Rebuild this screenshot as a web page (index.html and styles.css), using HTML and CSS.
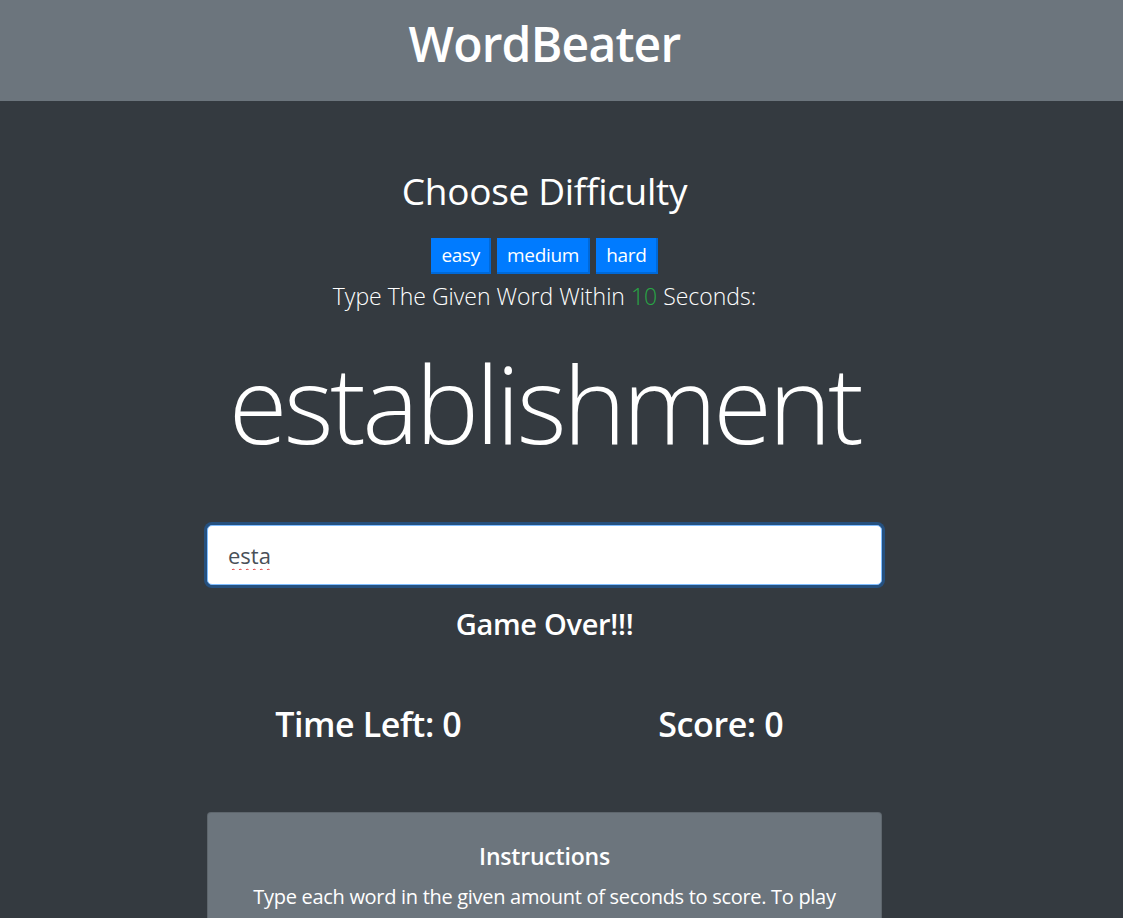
FILE: index.html
```html
<!DOCTYPE html>
<html lang="en">
<head>
<meta charset="utf-8">
<title>WordBeater</title>
<link rel="stylesheet" href="styles.css">
</head>
<body>
<header class="topbar">
  <div class="page">
    <h1 class="brand">WordBeater</h1>
  </div>
</header>
<main class="page">
  <div class="column">
    <h2 class="choose">Choose Difficulty</h2>
    <div class="levels">
      <button class="btn">easy</button>
      <button class="btn">medium</button>
      <button class="btn">hard</button>
    </div>
    <p class="lead">Type The Given Word Within <span class="secs">10</span> Seconds:</p>
    <h2 class="word">establishment</h2>
    <input class="word-input" type="text" value="esta" autofocus>
    <h4 class="message">Game Over!!!</h4>
    <div class="stats">
      <div class="stat"><h3>Time Left: <span>0</span></h3></div>
      <div class="stat"><h3>Score: <span>0</span></h3></div>
    </div>
    <div class="card">
      <h5 class="card-title">Instructions</h5>
      <p class="card-text">Type each word in the given amount of seconds to score. To play again, just type the current word. Your score will reset.</p>
    </div>
  </div>
</main>
</body>
</html>
```
FILE: styles.css
```css
html, body {
  margin: 0;
  padding: 0;
}
body {
  background: #343a40;
  color: #fff;
  font-family: "Open Sans", "Noto Sans", sans-serif;
  overflow: hidden;
}
.page {
  width: 1089px;
  display: flex;
  flex-direction: column;
  align-items: center;
}
.topbar {
  background: #6c757d;
  height: 101px;
}
.brand {
  margin: 0;
  padding-top: 15px;
  font-size: 48px;
  font-weight: 600;
  line-height: 1.2;
  letter-spacing: -0.8px;
}
.column {
  width: 675px;
  display: flex;
  flex-direction: column;
  align-items: center;
  text-align: center;
}
.choose {
  margin: 68px 0 0;
  font-size: 37px;
  font-weight: 400;
  line-height: 1.2;
  letter-spacing: -0.3px;
}
.levels {
  display: flex;
  gap: 6px;
  margin-top: 25px;
}
.btn {
  font-family: inherit;
  background: #007bff;
  color: #fff;
  border: none;
  border-right: 2px solid #0069d9;
  border-bottom: 2px solid #0069d9;
  border-radius: 0;
  height: 36px;
  padding: 0 9px 0 10px;
  font-size: 19px;
  line-height: 34px;
  letter-spacing: -0.3px;
}
.lead {
  margin: 7px 0 0;
  font-size: 23px;
  font-weight: 300;
  line-height: 30px;
  letter-spacing: 0;
}
.secs {
  color: #28a745;
}
.word {
  margin: 28px 0 0;
  font-size: 107px;
  font-weight: 300;
  line-height: 1.2;
  letter-spacing: -3.6px;
}
.word-input {
  box-sizing: border-box;
  width: 675px;
  height: 60px;
  margin-top: 57px;
  padding: 0 20px;
  font-family: inherit;
  font-size: 22px;
  color: #495057;
  background: #fff;
  border: 1px solid #80bdff;
  border-radius: 5px;
  box-shadow: 0 0 0 3px #25507f;
  outline: none;
  text-decoration: underline wavy #e03030;
  text-decoration-thickness: 1px;
  text-underline-offset: 4px;
}
.message {
  margin: 22px 0 0;
  font-size: 29px;
  font-weight: 600;
  line-height: 1.2;
  letter-spacing: -0.3px;
}
.stats {
  display: flex;
  width: 705px;
  margin-top: 62px;
}
.stat {
  flex: 1;
  text-align: center;
}
.stat h3 {
  margin: 0;
  font-size: 34px;
  font-weight: 600;
  line-height: 1.2;
  letter-spacing: -0.4px;
}
.card {
  box-sizing: border-box;
  width: 675px;
  margin-top: 68px;
  background: #6c757d;
  border: 1px solid rgba(0, 0, 0, 0.125);
  border-radius: 4px;
  padding: 30px 20px 20px;
}
.card-title {
  margin: 0;
  font-size: 23px;
  font-weight: 600;
  line-height: 1.2;
  letter-spacing: -0.2px;
}
.card-text {
  margin: 10px 0 0;
  font-size: 20px;
  line-height: 32px;
  letter-spacing: -0.3px;
}
```
